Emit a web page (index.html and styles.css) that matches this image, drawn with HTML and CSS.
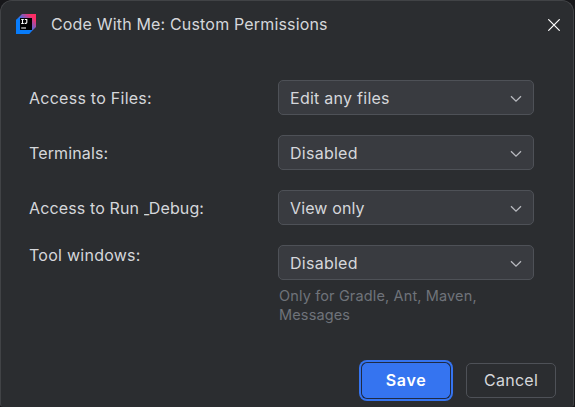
FILE: index.html
```html
<!DOCTYPE html>
<html lang="en">
<head>
<meta charset="utf-8">
<title>Code With Me: Custom Permissions</title>
<link rel="stylesheet" href="styles.css">
</head>
<body>
<main class="dialog">
  <header class="titlebar">
    <svg class="logo" width="20" height="20" viewBox="0 0 20 20">
      <defs>
        <linearGradient id="edge" x1="0" y1="1" x2="1" y2="0">
          <stop offset="0.4" stop-color="#087cfa"/>
          <stop offset="0.6" stop-color="#7a5cc0"/>
          <stop offset="0.85" stop-color="#ff2d64"/>
        </linearGradient>
      </defs>
      <path d="M6 0H20V13L13 20H0V6Z" fill="url(#edge)"/>
      <path d="M0 6L4 4V16H16L13 20H0Z" fill="#087cfa"/>
      <path d="M4 4H16V16H4Z" fill="#000"/>
      <path d="M5.2 5.5H7.8M6.5 5.5V9.5M5.2 9.5H7.8M8.8 5.5H10.8V8.5Q10.8 9.5 8.6 9.4M5.2 14H10" fill="none" stroke="#fff" stroke-width="1.1"/>
    </svg>
    <h1 class="title">Code With Me: Custom Permissions</h1>
    <svg class="close" width="12" height="12" viewBox="0 0 12 12"><path d="M0.3 0.3L11.7 11.7M11.7 0.3L0.3 11.7" stroke="#fff" stroke-width="1.2"/></svg>
  </header>
  <section class="form">
    <div class="row"><span class="label">Access to Files:</span><div class="select"><span>Edit any files</span><svg class="chevron" width="12" height="8" viewBox="0 0 12 8"><path d="M1 1.2L6 6.2L11 1.2"/></svg></div></div>
    <div class="row"><span class="label label-tight">Terminals:</span><div class="select"><span>Disabled</span><svg class="chevron" width="12" height="8" viewBox="0 0 12 8"><path d="M1 1.2L6 6.2L11 1.2"/></svg></div></div>
    <div class="row"><span class="label label-tight">Access to Run <span class="mnemonic">_</span>Debug:</span><div class="select"><span class="label-tight">View only</span><svg class="chevron" width="12" height="8" viewBox="0 0 12 8"><path d="M1 1.2L6 6.2L11 1.2"/></svg></div></div>
    <div class="row row-top"><span class="label">Tool windows:</span><div class="field"><div class="select"><span>Disabled</span><svg class="chevron" width="12" height="8" viewBox="0 0 12 8"><path d="M1 1.2L6 6.2L11 1.2"/></svg></div><p class="hint">Only for Gradle, Ant, Maven,<br>Messages</p></div></div>
  </section>
  <footer class="actions">
    <button class="btn primary">Save</button>
    <button class="btn">Cancel</button>
  </footer>
</main>
</body>
</html>
```

FILE: styles.css
```css
* { box-sizing: border-box; }
body {
  margin: 0;
  background: #17171a;
  font-family: Inter, "Liberation Sans", sans-serif;
  font-size: 16px;
  letter-spacing: 0.26px;
  color: #d5d7db;
}
.dialog {
  display: flex;
  flex-direction: column;
  width: 574px;
  height: 407px;
  background: #2b2d30;
  border: 1px solid #414346;
  border-bottom-color: #2b2d30;
  border-radius: 12px 12px 3px 3px;
}
.titlebar {
  display: flex;
  align-items: center;
  height: 46px;
  padding: 0 13px 0 15px;
}
.logo { display: block; }
.title { flex: 1; margin: 0 0 0 15px; font-size: 16px; font-weight: 400; line-height: 20px; letter-spacing: 0.17px; }
.close { display: block; margin-top: 2px; }
.form {
  display: flex;
  flex-direction: column;
  gap: 20px;
  padding: 33px 0 0 28px;
}
.row { display: flex; align-items: center; }
.row-top { align-items: flex-start; }
.label { width: 249px; line-height: 20px; }
.label-tight { letter-spacing: 0.13px; }
.mnemonic { display: inline-block; width: 5px; transform: scaleX(0.7); transform-origin: left; }
.select {
  display: flex;
  align-items: center;
  justify-content: space-between;
  width: 256px;
  height: 35px;
  padding: 1px 11px 0 11px;
  background: #393b40;
  border: 1px solid #4e5157;
  border-radius: 5px;
}
.chevron { margin-top: 2px; fill: none; stroke: #b8babf; stroke-width: 1.3; }
.hint {
  margin: 6px 0 0 1px;
  font-size: 14.5px;
  line-height: 19px;
  letter-spacing: 0.14px;
  color: #6f737a;
}
.actions {
  display: flex;
  justify-content: flex-end;
  gap: 16px;
  margin-top: auto;
  padding: 0 17px 8px 0;
}
.btn {
  width: 90px;
  height: 35px;
  padding: 0 0 2px;
  background: transparent;
  border: 1px solid #4e5157;
  border-radius: 5px;
  font: inherit;
  letter-spacing: inherit;
  color: #d5d7db;
}
.primary {
  width: 88px;
  background: #3574f0;
  border-color: #3574f0;
  color: #fff;
  font-weight: 600;
  letter-spacing: 0.7px;
  box-shadow: 0 0 0 1px #1f2a42, 0 0 0 3px #3574f0;
}
```
